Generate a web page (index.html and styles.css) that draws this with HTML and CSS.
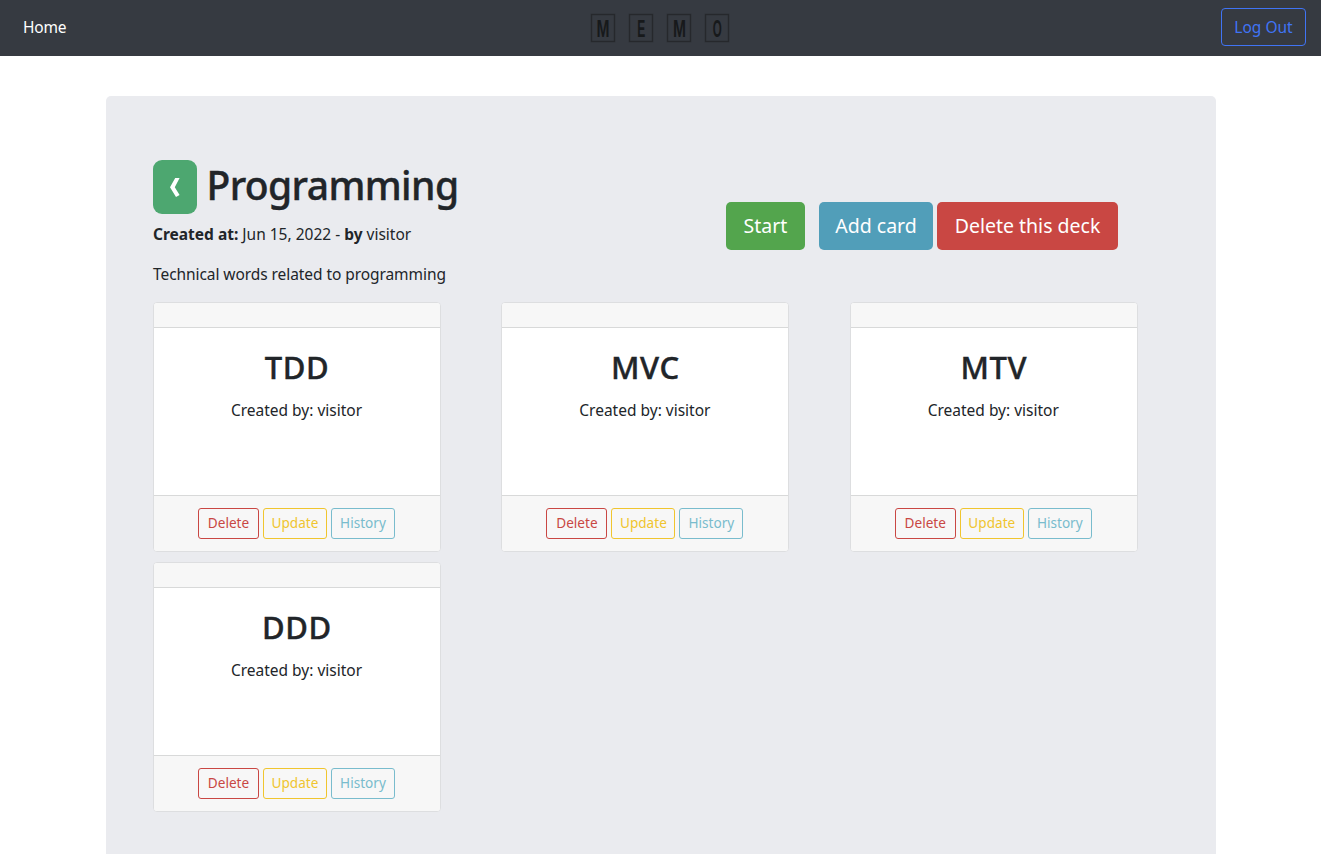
FILE: index.html
```html
<!DOCTYPE html>
<html lang="en">
<head>
<meta charset="utf-8">
<title>Memo - Programming</title>
<link rel="stylesheet" href="styles.css">
</head>
<body>
<nav class="navbar">
  <a class="nav-link">Home</a>
  <svg class="logo" width="140" height="30" viewBox="0 0 140 30" role="img" aria-label="Memo">
    <g class="logo-box">
      <rect x="1.5" y="1.5" width="23" height="27"/>
      <rect x="39.5" y="1.5" width="23" height="27"/>
      <rect x="77.5" y="1.5" width="23" height="27"/>
      <rect x="115.5" y="1.5" width="23" height="27"/>
    </g>
    <g class="logo-text">
      <text x="6.6" y="24" textLength="13" lengthAdjust="spacingAndGlyphs">M</text>
      <text x="47.3" y="24" textLength="8" lengthAdjust="spacingAndGlyphs">E</text>
      <text x="82.9" y="24" textLength="13" lengthAdjust="spacingAndGlyphs">M</text>
      <text x="122.7" y="24" textLength="9" lengthAdjust="spacingAndGlyphs">O</text>
    </g>
  </svg>
  <a class="logout">Log Out</a>
</nav>
<main class="panel">
  <header class="deck-head">
    <div class="deck-info">
      <div class="title-row">
        <a class="back" aria-label="Back"><svg width="10" height="19" viewBox="0 0 10 19"><path d="M5.2 0 H9.6 L4.8 9.3 L9.6 17.1 L6 18.9 L0 9.3 Z" fill="#fff"/></svg></a>
        <h1 class="title">Programming</h1>
      </div>
      <p class="meta"><b class="meta-label">Created at:</b> Jun 15, 2022 - <b class="meta-by">by</b> visitor</p>
      <p class="desc">Technical words related to programming</p>
    </div>
    <div class="actions">
      <a class="btn start">Start</a>
      <a class="btn add">Add card</a>
      <a class="btn remove">Delete this deck</a>
    </div>
  </header>
  <section class="cards">
    <article class="card"><div class="card-top"></div><div class="card-body"><h2 class="word">TDD</h2><p class="author">Created by: visitor</p></div><footer class="card-foot"><a class="small del">Delete</a><a class="small upd">Update</a><a class="small his">History</a></footer></article>
    <article class="card"><div class="card-top"></div><div class="card-body"><h2 class="word">MVC</h2><p class="author">Created by: visitor</p></div><footer class="card-foot"><a class="small del">Delete</a><a class="small upd">Update</a><a class="small his">History</a></footer></article>
    <article class="card"><div class="card-top"></div><div class="card-body"><h2 class="word">MTV</h2><p class="author">Created by: visitor</p></div><footer class="card-foot"><a class="small del">Delete</a><a class="small upd">Update</a><a class="small his">History</a></footer></article>
    <article class="card"><div class="card-top"></div><div class="card-body"><h2 class="word">DDD</h2><p class="author">Created by: visitor</p></div><footer class="card-foot"><a class="small del">Delete</a><a class="small upd">Update</a><a class="small his">History</a></footer></article>
  </section>
</main>
</body>
</html>
```
FILE: styles.css
```css
* { box-sizing: border-box; }
html, body { height: 100%; }
body {
  margin: 0;
  overflow: hidden;
  background: #fff;
  color: #212529;
  font: 15.5px/24px "Noto Sans", sans-serif;
}
h1, h2, p { margin: 0; }
a { white-space: nowrap; }

.navbar {
  display: grid;
  grid-template-columns: 1fr auto 1fr;
  align-items: center;
  height: 56px;
  padding: 0 15px 2px 23px;
  background: #363a41;
}
.nav-link { color: #fff; letter-spacing: -0.2px; }
.logo { margin: 2px 0 0 -9.5px; }
.logo-box { fill: none; stroke: #26282c; stroke-width: 1.4; }
.logo-text { font: bold 24px "Liberation Sans", sans-serif; fill: #17191b; }
.logout {
  justify-self: end;
  width: 85px;
  height: 38px;
  border: 1px solid #4074f5;
  border-radius: 4px;
  color: #4074f5;
  line-height: 36px;
  text-align: center;
}

.panel {
  width: 1110px;
  height: 800px;
  margin: 40px 0 0 106px;
  padding: 64px 47px;
  border-radius: 5px;
  background: #eaebef;
}
.deck-head { display: flex; height: 142px; }
.deck-info { width: 573px; }
.title-row { display: flex; align-items: flex-start; gap: 9.5px; height: 62px; }
.back {
  display: flex;
  align-items: center;
  justify-content: center;
  width: 44px;
  height: 54px;
  border-radius: 9px;
  background: #4da770;
}
.title {
  font-size: 39px;
  font-weight: 500;
  line-height: 50px;
  letter-spacing: -0.6px;
  -webkit-text-stroke: 0.4px #212529;
}
.meta { margin-bottom: 16px; }
.desc { letter-spacing: -0.07px; }
.actions { display: flex; align-items: flex-start; padding-top: 42px; }
.btn {
  height: 48px;
  border-radius: 5px;
  color: #fff;
  font-size: 19.5px;
  line-height: 47px;
  text-align: center;
}
.start { width: 79px; margin-right: 14px; background: #53a54d; }
.add { width: 114px; margin-right: 4px; background: #519eb9; }
.remove { width: 181px; background: #c94743; }

.cards {
  display: grid;
  grid-template-columns: repeat(3, 288px);
  gap: 10px 60.4px;
}
.card {
  display: flex;
  flex-direction: column;
  height: 250px;
  border: 1px solid #dddee0;
  border-radius: 4px;
  background: #fff;
  overflow: hidden;
}
.card-top { height: 25px; background: #f7f7f7; border-bottom: 1px solid #d8d9d9; }
.card-body { flex: 1; padding-top: 20px; text-align: center; }
.word {
  margin-bottom: 11px;
  font-size: 31px;
  font-weight: 500;
  line-height: 39px;
  letter-spacing: 0.6px;
  -webkit-text-stroke: 0.4px #212529;
}
.author { padding-right: 1px; }
.card-foot {
  display: flex;
  justify-content: center;
  gap: 4px;
  height: 56px;
  padding: 12px 1px 0 0;
  border-top: 1px solid #d8d9d9;
  background: #f7f7f7;
}
.small {
  height: 31px;
  border: 1px solid;
  border-radius: 3px;
  font-size: 13.6px;
  line-height: 28px;
  text-align: center;
}
.del { width: 61px; color: #c94743; }
.upd { width: 64px; color: #f0c52e; }
.his { width: 64px; color: #79bccd; }
```
